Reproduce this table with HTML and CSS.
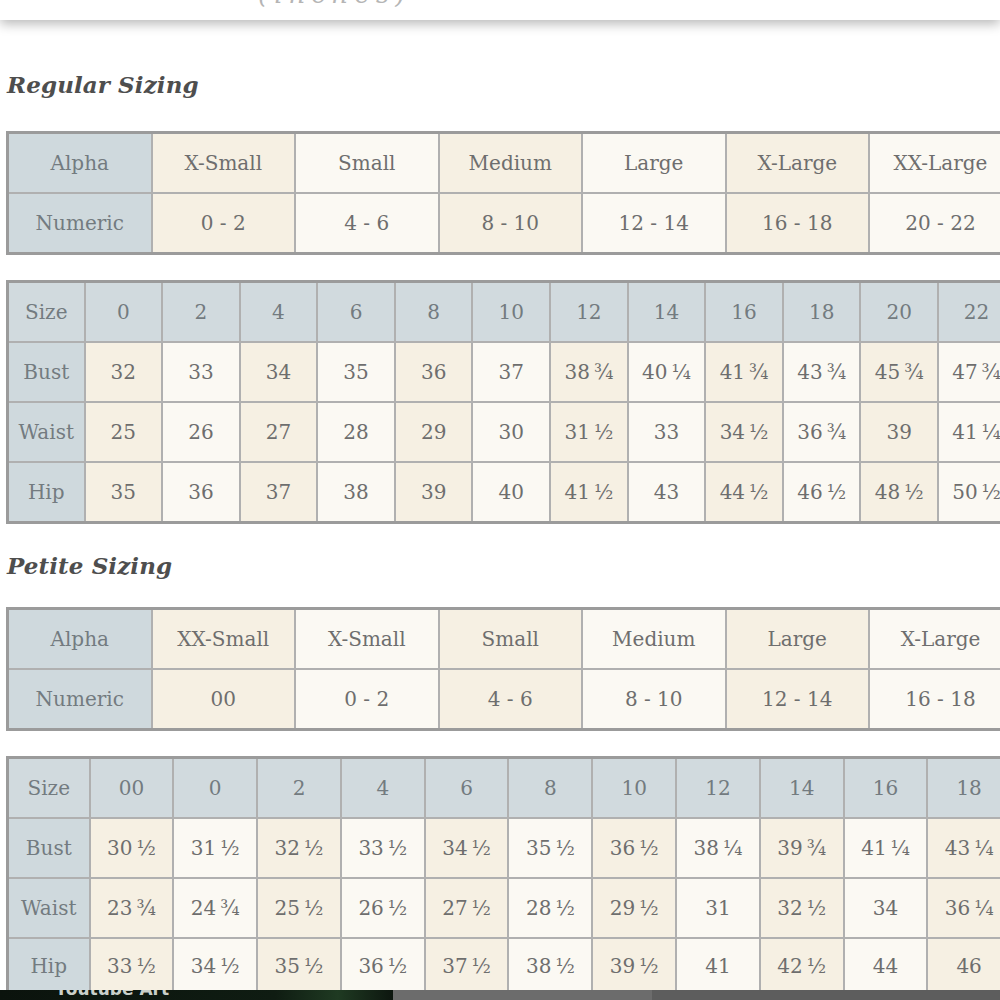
FILE: index.html
```html
<!DOCTYPE html>
<html lang="en">
<head>
<meta charset="utf-8">
<title>Size Chart</title>
<link rel="stylesheet" href="styles.css">
</head>
<body>
<div class="page">
  <div class="top-card"><span class="cut-note">(inches)</span></div>

  <h2 class="section-title first">Regular Sizing</h2>
  <table class="chart alpha">
    <colgroup><col class="c-lbl"><col><col><col><col><col><col></colgroup>
    <tr><th>Alpha</th><td class="bg">X-Small</td><td class="wt">Small</td><td class="bg">Medium</td><td class="wt">Large</td><td class="bg">X-Large</td><td class="wt">XX-Large</td></tr>
    <tr><th>Numeric</th><td class="bg">0 - 2</td><td class="wt">4 - 6</td><td class="bg">8 - 10</td><td class="wt">12 - 14</td><td class="bg">16 - 18</td><td class="wt">20 - 22</td></tr>
  </table>

  <table class="chart sizes regular">
    <colgroup><col class="c-lbl"><col><col><col><col><col><col><col><col><col><col><col><col></colgroup>
    <tr class="head"><th>Size</th><th>0</th><th>2</th><th>4</th><th>6</th><th>8</th><th>10</th><th>12</th><th>14</th><th>16</th><th>18</th><th>20</th><th>22</th></tr>
    <tr><th>Bust</th><td class="bg">32</td><td class="wt">33</td><td class="bg">34</td><td class="wt">35</td><td class="bg">36</td><td class="wt">37</td><td class="bg">38&#8239;¾</td><td class="wt">40&#8239;¼</td><td class="bg">41&#8239;¾</td><td class="wt">43&#8239;¾</td><td class="bg">45&#8239;¾</td><td class="wt">47&#8239;¾</td></tr>
    <tr><th>Waist</th><td class="bg">25</td><td class="wt">26</td><td class="bg">27</td><td class="wt">28</td><td class="bg">29</td><td class="wt">30</td><td class="bg">31&#8239;½</td><td class="wt">33</td><td class="bg">34&#8239;½</td><td class="wt">36&#8239;¾</td><td class="bg">39</td><td class="wt">41&#8239;¼</td></tr>
    <tr><th>Hip</th><td class="bg">35</td><td class="wt">36</td><td class="bg">37</td><td class="wt">38</td><td class="bg">39</td><td class="wt">40</td><td class="bg">41&#8239;½</td><td class="wt">43</td><td class="bg">44&#8239;½</td><td class="wt">46&#8239;½</td><td class="bg">48&#8239;½</td><td class="wt">50&#8239;½</td></tr>
  </table>

  <h2 class="section-title">Petite Sizing</h2>
  <table class="chart alpha">
    <colgroup><col class="c-lbl"><col><col><col><col><col><col></colgroup>
    <tr><th>Alpha</th><td class="bg">XX-Small</td><td class="wt">X-Small</td><td class="bg">Small</td><td class="wt">Medium</td><td class="bg">Large</td><td class="wt">X-Large</td></tr>
    <tr><th>Numeric</th><td class="bg">00</td><td class="wt">0 - 2</td><td class="bg">4 - 6</td><td class="wt">8 - 10</td><td class="bg">12 - 14</td><td class="wt">16 - 18</td></tr>
  </table>

  <table class="chart sizes petite">
    <colgroup><col class="c-lbl"><col><col><col><col><col><col><col><col><col><col><col></colgroup>
    <tr class="head"><th>Size</th><th>00</th><th>0</th><th>2</th><th>4</th><th>6</th><th>8</th><th>10</th><th>12</th><th>14</th><th>16</th><th>18</th></tr>
    <tr><th>Bust</th><td class="bg">30&#8239;½</td><td class="wt">31&#8239;½</td><td class="bg">32&#8239;½</td><td class="wt">33&#8239;½</td><td class="bg">34&#8239;½</td><td class="wt">35&#8239;½</td><td class="bg">36&#8239;½</td><td class="wt">38&#8239;¼</td><td class="bg">39&#8239;¾</td><td class="wt">41&#8239;¼</td><td class="bg">43&#8239;¼</td></tr>
    <tr><th>Waist</th><td class="bg">23&#8239;¾</td><td class="wt">24&#8239;¾</td><td class="bg">25&#8239;½</td><td class="wt">26&#8239;½</td><td class="bg">27&#8239;½</td><td class="wt">28&#8239;½</td><td class="bg">29&#8239;½</td><td class="wt">31</td><td class="bg">32&#8239;½</td><td class="wt">34</td><td class="bg">36&#8239;¼</td></tr>
    <tr class="last"><th>Hip</th><td class="bg">33&#8239;½</td><td class="wt">34&#8239;½</td><td class="bg">35&#8239;½</td><td class="wt">36&#8239;½</td><td class="bg">37&#8239;½</td><td class="wt">38&#8239;½</td><td class="bg">39&#8239;½</td><td class="wt">41</td><td class="bg">42&#8239;½</td><td class="wt">44</td><td class="bg">46</td></tr>
  </table>
</div>
<div class="ad-strip">
  <div class="ad-dark"><span class="ad-text">Youtube Art</span></div>
  <div class="ad-mid"></div>
  <div class="ad-right"></div>
</div>
</body>
</html>
```

FILE: styles.css
```css
html, body {
  margin: 0;
  padding: 0;
  background: #ffffff;
  overflow: hidden;
}

body {
  width: 1000px;
  height: 1000px;
  font-family: "DejaVu Serif", "Liberation Serif", serif;
}

.page {
  height: 990px;
  overflow: hidden;
}

.top-card {
  height: 20px;
  background: #ffffff;
  box-shadow: 0 4px 12px rgba(0, 0, 0, 0.28);
  overflow: hidden;
  padding-left: 258px;
}

.cut-note {
  display: block;
  font-size: 26px;
  font-style: italic;
  line-height: 26px;
  margin-top: -19px;
  color: #b5b5b5;
  letter-spacing: 6px;
}

.section-title {
  margin: 27px 0 26px 7px;
  font-family: "DejaVu Serif", serif;
  font-weight: bold;
  font-style: italic;
  font-size: 23px;
  line-height: 30px;
  color: #4e4e4e;
  letter-spacing: 0.1px;
}

.section-title.first {
  margin-top: 50px;
  margin-bottom: 31px;
}

.chart {
  border-collapse: collapse;
  table-layout: fixed;
  margin-left: 6px;
  border: 3px solid #9b9b9b;
  font-size: 20px;
  color: #6e6e6e;
}

.chart th,
.chart td {
  border: 2px solid #b0b0b0;
  padding: 0;
  height: 58px;
  text-align: center;
  vertical-align: middle;
  font-weight: normal;
  white-space: nowrap;
  overflow: hidden;
}

.chart th {
  background: #cfd9dd;
  color: #737b80;
}

.chart .head th {
  background: #d1dade;
}

.chart .bg {
  background: #f6f0e3;
}

.chart .wt {
  background: #fbf9f3;
}

.petite .last th,
.petite .last td {
  vertical-align: top;
  padding-top: 15px;
  height: 43px;
}

.alpha {
  width: 1005px;
  margin-bottom: 25px;
}

.alpha col {
  width: 143.5px;
}

.alpha col.c-lbl {
  width: 144px;
}

.regular {
  width: 1008px;
}

.regular col {
  width: 77.6px;
}

.regular col.c-lbl {
  width: 77px;
}

.petite {
  width: 1004px;
}

.petite col {
  width: 83.8px;
}

.petite col.c-lbl {
  width: 82px;
}

.ad-strip {
  display: flex;
  height: 10px;
  overflow: hidden;
}

.ad-dark {
  width: 393px;
  background: linear-gradient(90deg, #0b130d 0%, #0f1c12 70%, #1f3a22 86%, #0d160f 100%);
  overflow: hidden;
  padding-left: 55px;
  box-sizing: border-box;
}

.ad-text {
  display: block;
  font-family: "DejaVu Sans", sans-serif;
  font-weight: bold;
  font-size: 17px;
  line-height: 10px;
  margin-top: -6px;
  color: #c9cfc9;
}

.ad-mid {
  width: 259px;
  background: #6c6c6c;
}

.ad-right {
  flex: 1;
  background: #5d5d5d;
}
```
